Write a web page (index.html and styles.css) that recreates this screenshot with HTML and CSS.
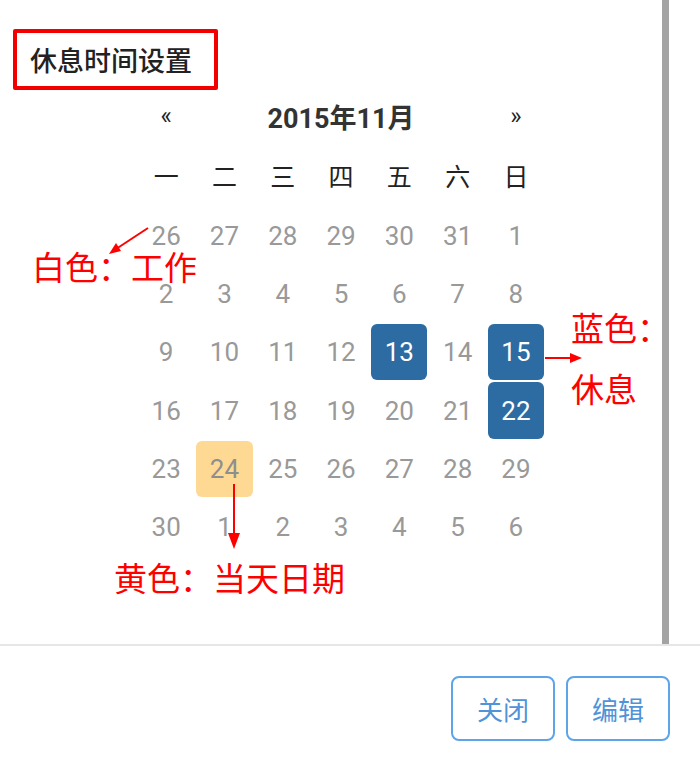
FILE: index.html
```html
<!DOCTYPE html>
<html lang="zh">
<head>
<meta charset="utf-8">
<link rel="stylesheet" href="styles.css">
</head>
<body>
<div class="page">
  <div class="panel">
    <div class="content">
      <div class="title-box"><span class="title">休息时间设置</span></div>
      <div class="calendar">
        <div class="nav">&laquo;</div>
        <div class="month">2015年11月</div>
        <div class="nav">&raquo;</div>
        <div class="wd">一</div><div class="wd">二</div><div class="wd">三</div><div class="wd">四</div><div class="wd">五</div><div class="wd">六</div><div class="wd">日</div>
        <div class="d">26</div><div class="d">27</div><div class="d">28</div><div class="d">29</div><div class="d">30</div><div class="d">31</div><div class="d">1</div>
        <div class="d">2</div><div class="d">3</div><div class="d">4</div><div class="d">5</div><div class="d">6</div><div class="d">7</div><div class="d">8</div>
        <div class="d">9</div><div class="d">10</div><div class="d">11</div><div class="d">12</div><div class="d rest">13</div><div class="d">14</div><div class="d rest">15</div>
        <div class="d">16</div><div class="d">17</div><div class="d">18</div><div class="d">19</div><div class="d">20</div><div class="d">21</div><div class="d rest">22</div>
        <div class="d">23</div><div class="d today">24</div><div class="d">25</div><div class="d">26</div><div class="d">27</div><div class="d">28</div><div class="d">29</div>
        <div class="d">30</div><div class="d">1</div><div class="d">2</div><div class="d">3</div><div class="d">4</div><div class="d">5</div><div class="d">6</div>
      </div>
    </div>
    <div class="scrollbar"></div>
  </div>
  <div class="footer">
    <button class="btn">关闭</button>
    <button class="btn">编辑</button>
  </div>

  <div class="note note-white">白色：工作</div>
  <div class="note note-blue1">蓝色：</div>
  <div class="note note-blue2">休息</div>
  <div class="note note-yellow">黄色：当天日期</div>
  <svg class="arrows" width="700" height="771" viewBox="0 0 700 771">
    <g stroke="#f00" stroke-width="2" fill="none">
      <line x1="148" y1="228" x2="113" y2="251"/>
      <line x1="545" y1="358" x2="578" y2="358"/>
      <line x1="234" y1="484" x2="234" y2="540"/>
    </g>
    <g fill="#f00">
      <polygon points="109,254 116,243 121,251"/>
      <polygon points="582,358 570,353 570,363"/>
      <polygon points="234,549 228,533 240,533"/>
    </g>
  </svg>
</div>
</body>
</html>
```
FILE: styles.css
```css
html, body {
  margin: 0;
  padding: 0;
  background: #fff;
}
.page {
  position: relative;
  width: 700px;
  height: 771px;
  overflow: hidden;
  font-family: Roboto, "Noto Sans CJK SC", sans-serif;
}
.panel {
  display: flex;
  height: 644px;
}
.content {
  flex: 1;
  padding-top: 29px;
}
.scrollbar {
  width: 7px;
  margin-right: 31px;
  background: #a3a3a3;
}
.title-box {
  margin-left: 13px;
  height: 53px;
  border: 4px solid #f20000;
  border-radius: 2px;
  display: flex;
  align-items: center;
  padding-left: 13px;
  box-sizing: content-box;
  width: 184px;
}
.title {
  font-family: "Noto Sans CJK SC", sans-serif;
  font-size: 27px;
  color: #222;
  font-weight: 500;
  line-height: 1;
}
.calendar {
  margin-left: 137px;
  width: 408px;
  display: grid;
  grid-template-columns: repeat(7, 58.3px);
  grid-auto-rows: 58.3px;
}
.nav {
  display: flex;
  align-items: center;
  justify-content: center;
  font-size: 24px;
  color: #222;
  padding-bottom: 6px;
}
.month {
  grid-column: span 5;
  display: flex;
  align-items: center;
  justify-content: center;
  font-family: Roboto, "Noto Sans CJK SC", sans-serif;
  font-size: 27px;
  font-weight: 700;
  color: #333;
  padding-bottom: 6px;
}
.wd {
  display: flex;
  align-items: center;
  justify-content: center;
  font-family: "Noto Sans CJK SC", sans-serif;
  font-size: 25px;
  color: #222;
  padding-bottom: 5px;
}
.d {
  display: flex;
  align-items: center;
  justify-content: center;
  font-size: 26px;
  color: #999;
  margin: 1px;
  border-radius: 6px;
}
.d.rest {
  background: #2d6ca2;
  color: #fff;
}
.d.today {
  background: #fdd993;
  color: #8e8e8e;
}
.footer {
  border-top: 2px solid #e6e6e6;
  display: flex;
  justify-content: flex-end;
  gap: 11px;
  padding: 30px 30px 0 0;
}
.btn {
  width: 104px;
  height: 65px;
  border: 2px solid #5ea4e8;
  border-radius: 8px;
  background: #fff;
  color: #4f93d8;
  font-family: "Noto Sans CJK SC", sans-serif;
  font-size: 26px;
  padding: 0;
}
.note {
  position: absolute;
  font-family: "Noto Sans CJK SC", serif;
  color: #f00;
  font-size: 33px;
  line-height: 1;
  white-space: nowrap;
}
.note-white { left: 32px; top: 250px; }
.note-blue1 { left: 571px; top: 311px; }
.note-blue2 { left: 571px; top: 372px; }
.note-yellow { left: 114px; top: 561px; }
.arrows {
  position: absolute;
  left: 0;
  top: 0;
  pointer-events: none;
}
```
